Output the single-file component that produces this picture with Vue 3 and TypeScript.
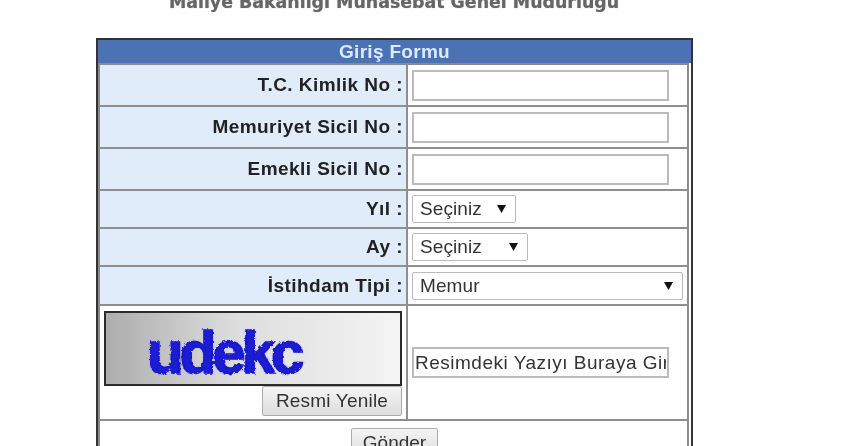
<script setup lang="ts">
interface Row { label: string; kind: 'input' | 'select'; value?: string; width?: number; h: number }
const rows: Row[] = [
  { label: 'T.C. Kimlik No :', kind: 'input', h: 42 },
  { label: 'Memuriyet Sicil No :', kind: 'input', h: 42 },
  { label: 'Emekli Sicil No :', kind: 'input', h: 42 },
  { label: 'Yıl :', kind: 'select', value: 'Seçiniz', width: 104, h: 38 },
  { label: 'Ay :', kind: 'select', value: 'Seçiniz', width: 116, h: 38 },
  { label: 'İstihdam Tipi :', kind: 'select', value: 'Memur', width: 271, h: 39 },
]
</script>

<template>
  <div class="page">
    <svg class="defs" width="0" height="0" aria-hidden="true">
      <filter id="rough" x="-10%" y="-10%" width="120%" height="120%">
        <feTurbulence type="fractalNoise" baseFrequency="0.35" numOctaves="2" seed="4" />
        <feDisplacementMap in="SourceGraphic" scale="3.5" />
      </filter>
    </svg>
    <div class="title">Maliye Bakanlığı Muhasebat Genel Müdürlüğü</div>
    <div class="form">
      <div class="head">Giriş Formu</div>
      <div class="grid">
        <div v-for="r in rows" :key="r.label" class="row" :style="{ height: r.h + 'px' }">
          <div class="label">{{ r.label }}</div>
          <div class="field">
            <input v-if="r.kind === 'input'" class="text" type="text" />
            <div v-else class="select" :style="{ width: r.width + 'px' }">
              <span>{{ r.value }}</span>
              <svg width="9" height="8" viewBox="0 0 9 8"><path d="M0 0h9L4.5 8z" fill="#111" /></svg>
            </div>
          </div>
        </div>
        <div class="row captcha-row">
          <div class="captcha-cell">
            <div class="captcha"><span class="code">udekc</span></div>
            <button class="btn" type="button">Resmi Yenile</button>
          </div>
          <div class="field">
            <input class="text" type="text" value="Resimdeki Yazıyı Buraya Girin" />
          </div>
        </div>
        <div class="submit-row">
          <button class="btn send" type="button">Gönder</button>
        </div>
      </div>
    </div>
  </div>
</template>

<style>
html, body { margin: 0; background: #fff; overflow: hidden; }
</style>

<style scoped>
.page {
  width: 848px;
  height: 446px;
  overflow: hidden;
  background: #fff;
  font-family: "Liberation Sans", Arial, sans-serif;
  filter: blur(0.45px);
}
.defs { position: absolute; }
.title {
  height: 38px;
  margin-top: -8px;
  margin-bottom: 8px;
  padding-right: 60px;
  text-align: center;
  font: bold 17.4px/20px "DejaVu Sans", sans-serif;
  color: #666;
  text-shadow: 0 0 1px #999;
  white-space: nowrap;
}
.form {
  width: 597px;
  margin-left: 96px;
  border: 2px solid #333;
  border-bottom: 0;
  height: 420px;
  box-sizing: border-box;
}
.head {
  height: 23px;
  background: #4a72b4;
  color: #d9ecff;
  font-size: 19px;
  font-weight: bold;
  line-height: 24px;
  text-align: center;
  letter-spacing: 0.3px;
}
.grid {
  margin: 0 2px 0 0;
  border-left: 2px solid #8b8b8b;
  border-right: 2px solid #8b8b8b;
  border-top: 2px solid #8b8b8b;
  height: 400px;
  box-sizing: border-box;
}
.row {
  display: grid;
  grid-template-columns: 308px 1fr;
  border-bottom: 2px solid #8f8f8f;
  box-sizing: border-box;
}
.label {
  background: #e1ecfb;
  border-right: 2px solid #8f8f8f;
  display: flex;
  align-items: center;
  justify-content: flex-end;
  padding-right: 3px;
  font-size: 19px;
  font-weight: bold;
  letter-spacing: 0.45px;
  color: #222;
}
.field {
  display: flex;
  align-items: center;
  padding-left: 4px;
}
.text {
  width: 257px;
  height: 31px;
  box-sizing: border-box;
  border: 2px solid #bbb;
  background: #fff;
  padding: 0 1px;
  margin: 0;
  font: 19px "Liberation Sans", Arial, sans-serif;
  letter-spacing: 0.5px;
  color: #333;
  outline: none;
}
.select {
  height: 28px;
  box-sizing: border-box;
  border: 1px solid #bbb;
  border-radius: 2px;
  background: #fff;
  display: flex;
  align-items: center;
  justify-content: space-between;
  padding: 0 9px 0 7px;
  font-size: 19px;
  letter-spacing: 0.1px;
  color: #333;
}
.captcha-row { height: 115px; }
.captcha-cell {
  border-right: 2px solid #8f8f8f;
  display: flex;
  flex-direction: column;
  align-items: flex-end;
  padding: 5px 4px 0 3px;
}
.captcha {
  width: 298px;
  height: 75px;
  box-sizing: border-box;
  flex: none;
  border: 2px solid #2b2b2b;
  background: linear-gradient(90deg, #adadad 0%, #dedede 45%, #f4f4f4 100%);
  padding-left: 41px;
  overflow: hidden;
}
.code {
  display: block;
  font: bold 60px/56px "Liberation Sans", sans-serif;
  color: #1a1ad0;
  letter-spacing: -4px;
  -webkit-text-stroke: 1.5px #1a1ad0;
  text-shadow: 0 0 2px #3a3af0;
  filter: url(#rough);
  margin-top: 12px;
}
.btn {
  height: 30px;
  width: 140px;
  box-sizing: border-box;
  border: 1px solid #adadad;
  border-radius: 2px;
  background: linear-gradient(#f4f4f4, #dedede);
  font: 19px "Liberation Sans", Arial, sans-serif;
  letter-spacing: 0.2px;
  color: #333;
  padding: 0;
  margin: 0;
  flex: none;
}
.submit-row {
  display: flex;
  justify-content: center;
  padding: 7px 0 0 2px;
}
.send { width: 87px; letter-spacing: 0; }
</style>
